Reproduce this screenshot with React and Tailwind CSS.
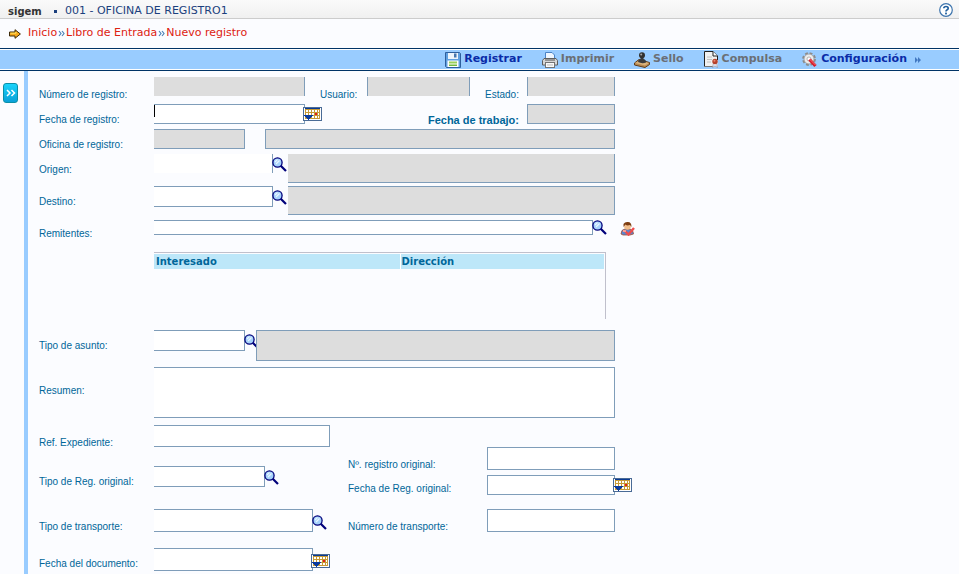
import React from "react";

const SearchIcon = () => (
  <svg width="15" height="15" viewBox="0 0 15 15" aria-hidden="true">
    <path d="M8.500 8.500 L14 14" stroke="#00007a" strokeWidth="2.200" />
    <circle cx="5.500" cy="5.500" r="4.600" fill="#a6d2fb" stroke="#00007a" strokeWidth="1.300" />
    <path d="M3 5 L5.500 2.500 M4 7 L7.500 3.500" stroke="#e8f6ff" strokeWidth="1.200" />
  </svg>
);

const CalendarIcon = () => (
  <svg width="19" height="14" viewBox="0 0 19 14" shapeRendering="crispEdges" aria-hidden="true">
    <rect width="19" height="14" fill="#4a6b96" />
    <rect x="1" y="1" width="17" height="12" fill="#fff" />
    <rect x="2" y="1" width="15" height="1" fill="#0a3a94" />
    <rect x="2" y="2" width="15" height="10" fill="#c79a35" />
    <path
      d="M3 3h2v2H3zM6 3h2v2H6zM9 3h2v2H9zM12 3h2v2h-2zM15 3h1v2h-1zM3 6h2v2H3zM6 6h2v2H6zM9 6h2v2H9zM15 6h1v2h-1zM9 9h2v2H9zM12 9h2v2h-2zM15 9h1v2h-1z"
      fill="#fff"
    />
    <rect x="12" y="6" width="2" height="2" fill="#e0201b" />
    <path d="M1 8h9v1H9v1H8v1H7v1H6v1H5v-1H4v-1H3v-1H2V9H1z" fill="#0a3a9c" />
  </svg>
);

const PersonIcon = () => (
  <svg width="15" height="15" viewBox="0 0 15 15" aria-hidden="true">
    <path d="M1 13 Q1 8.500 5 8 L10 8 Q13.500 9 13.500 13 L10 14 H3 Z" fill="#5b86cf" stroke="#a54b32" strokeWidth="0.800" />
    <circle cx="7.500" cy="5.500" r="3.300" fill="#f1bd8b" />
    <path d="M3.500 6 V3 Q5 0.500 8 1 Q11.500 1 11.500 6 L10 4 Q7 5 5.500 3.500 Z" fill="#7d3d12" />
    <path d="M5 10 L8.500 13.500 L14 7" fill="none" stroke="#ef4d4d" strokeWidth="2.400" />
    <path d="M3 10 H6" stroke="#fb9b90" strokeWidth="2" />
  </svg>
);

const SaveIcon = () => (
  <svg width="16" height="16" viewBox="0 0 16 16" aria-hidden="true">
    <path d="M0.500 0.500 H14.500 L15.500 1.500 V15.500 H1.500 L0.500 14.500 Z" fill="#5f9fe0" stroke="#2e5f9d" />
    <rect x="3" y="1" width="10" height="6" fill="#eef5fc" />
    <rect x="9" y="1.500" width="2.500" height="4" fill="#4676ae" />
    <rect x="2.500" y="8.500" width="11" height="6.500" fill="#fff" />
    <rect x="4" y="9.500" width="8" height="2" fill="#9ad05d" />
    <rect x="4" y="12.500" width="8" height="1.500" fill="#70b83c" />
  </svg>
);

const PrintIcon = () => (
  <svg width="16" height="16" viewBox="0 0 16 16" aria-hidden="true">
    <path d="M3.500 7 V0.500 H10 L12.500 3 V7" fill="#eef6ff" stroke="#4b83c6" />
    <path d="M2 6.500 H14 L15.500 8.500 V13 H0.500 V8.500 Z" fill="#d7d7d7" stroke="#5e5e5e" />
    <path d="M3 8 H13" stroke="#555" />
    <rect x="3.500" y="10.500" width="9" height="5" fill="#fafafa" stroke="#747474" />
    <path d="M5 13 H11" stroke="#bbb" />
  </svg>
);

const StampIcon = () => (
  <svg width="16" height="16" viewBox="0 0 16 16" aria-hidden="true">
    <path d="M0.500 11 L5 7.500 L15.500 10.500 V12.500 L11 15.500 L0.500 13 Z" fill="#b98a52" stroke="#5e3d1c" />
    <path d="M1 11 L5.500 8.500 L15 11 L11 13.500 Z" fill="#d9b27b" />
    <path d="M4 10 Q4 7.500 6.500 7 V5 H9.500 V7 Q12.500 8 12 10.500 Q8 12 4 10 Z" fill="#3b3b3b" />
    <circle cx="8" cy="3.200" r="3" fill="#303030" />
    <circle cx="7.200" cy="2.400" r="1" fill="#a5a5a5" />
  </svg>
);

const CertifiedIcon = () => (
  <svg width="15" height="17" viewBox="0 0 15 17" aria-hidden="true">
    <path d="M0.500 0.500 H9 L13.500 5 V15.500 H0.500 Z" fill="#f1f1f1" />
    <path d="M0.500 15.500 V0.500 H9 L13.500 5 V9" fill="none" stroke="#222" />
    <path d="M9 0.500 V5 H13.500" fill="#fff" stroke="#222" />
    <path d="M3 6 H8 M3 8.500 H8 M3 11 H7" stroke="#c2c2c2" />
    <path d="M0.500 15.500 H9" stroke="#777" />
    <path d="M9.500 12 L8.500 16.500 L11 15 L13.500 16.500 L12.500 12" fill="#e9e9f3" stroke="#8b8b9b" strokeWidth="0.600" />
    <circle cx="11" cy="10.500" r="2.700" fill="#b5402b" />
    <circle cx="10.500" cy="9.800" r="1" fill="#e9876d" />
  </svg>
);

const SettingsIcon = () => (
  <svg width="16" height="16" viewBox="0 0 16 16" aria-hidden="true">
    <circle cx="7" cy="7" r="5.700" fill="none" stroke="#8b8b8b" strokeWidth="2.400" strokeDasharray="2.700 1.770" />
    <circle cx="7" cy="7" r="5" fill="#ececec" stroke="#999" strokeWidth="0.800" />
    <circle cx="7" cy="7" r="2" fill="#fff" stroke="#999" strokeWidth="0.700" />
    <path d="M7.500 7.500 L13.500 14" stroke="#d51c2b" strokeWidth="3.200" />
    <path d="M7.500 7 L13.500 13" stroke="#ff8588" strokeWidth="0.800" />
  </svg>
);

const ArrowIcon = () => (
  <svg width="12" height="10" viewBox="0 0 12 10" aria-hidden="true">
    <path d="M0.500 3 H6 V0.700 L11.400 5 L6 9.300 V7 H0.500 Z" fill="#f7a91c" stroke="#3d2a08" />
    <path d="M1.500 4.200 H7 V3" fill="none" stroke="#ffe45f" />
  </svg>
);

const HelpIcon = () => (
  <svg width="14" height="14" viewBox="0 0 14 14" aria-hidden="true">
    <circle cx="7" cy="7" r="6.300" fill="#fff" stroke="#3d74ad" strokeWidth="1.200" />
    <path d="M4.800 5.300 Q4.900 3.500 7 3.500 Q9.200 3.500 9.200 5.200 Q9.200 6.300 7.900 6.900 Q7 7.400 7 8.500" fill="none" stroke="#215f9e" strokeWidth="1.700" />
    <rect x="6.100" y="9.600" width="1.800" height="1.800" fill="#215f9e" />
  </svg>
);

const CrumbMark = () => (
  <svg width="7" height="7" viewBox="0 0 7 7" aria-hidden="true">
    <path d="M1 1 L3 3.500 L1 6 M4 1 L6 3.500 L4 6" fill="none" stroke="#4a83b8" strokeWidth="1.200" />
  </svg>
);

const PanelChevrons = () => (
  <svg width="10" height="8" viewBox="0 0 10 8" aria-hidden="true">
    <path d="M1 1 L4 4 L1 7 M5.500 1 L8.500 4 L5.500 7" fill="none" stroke="#ffffff" strokeWidth="1.500" />
  </svg>
);

const FastForward = () => (
  <svg width="6" height="6" viewBox="0 0 6 6" aria-hidden="true">
    <path d="M0 0 L3 3 L0 6 Z M3 0 L6 3 L3 6 Z" fill="#4279c2" />
  </svg>
);

const LINE = "border-[#7f9db9]";
const OPEN_LEFT = "border-y border-r";

function Label({ htmlFor, className = "w-[115px] pt-2", children }) {
  return (
    <label htmlFor={htmlFor} className={`shrink-0 whitespace-nowrap ${className}`}>
      {children}
    </label>
  );
}

function Field({ id, className, edges = OPEN_LEFT, locked = false, ...rest }) {
  return (
    <input
      id={id}
      type="text"
      readOnly={locked}
      className={`min-w-0 rounded-none px-1 text-black outline-none ${LINE} ${edges} ${locked ? "bg-[#dddddd]" : "bg-white"} ${className}`}
      {...rest}
    />
  );
}

const Lookup = ({ label, className = "mt-1" }) => (
  <button type="button" aria-label={label} className={`relative -ml-px h-[15px] w-4 shrink-0 ${className}`}>
    <SearchIcon />
  </button>
);

const DatePick = ({ label, className = "mt-[3px]" }) => (
  <button type="button" aria-label={label} className={`relative -ml-0.5 h-3.5 shrink-0 ${className}`}>
    <CalendarIcon />
  </button>
);

function Action({ icon, enabled = false, children }) {
  return (
    <button
      type="button"
      disabled={!enabled}
      className={`flex items-center gap-[3px] text-[11px] font-bold ${enabled ? "text-[#0a2ba8]" : "text-[#6b6f75]"}`}
    >
      {icon}
      <span className="pb-0.5 leading-4">{children}</span>
    </button>
  );
}

export default function App() {
  return (
    <div className="flex min-h-screen flex-col bg-[#fbfcff] font-['Verdana','DejaVu_Sans',sans-serif] text-[11px]">
      <header className="flex h-[19px] items-center border-b border-[#cccccc] bg-gradient-to-b from-[#fafafa] to-[#f0f0f0] pt-1 pr-1.5 pl-2">
        <strong className="w-[46px] text-[10px] text-[#333333]">sigem</strong>
        <span className="mr-2 size-[3px] bg-[#1b3f7d]" />
        <span className="text-[#1b3f7d]">001 - OFICINA DE REGISTRO1</span>
        <button type="button" aria-label="Ayuda" className="ml-auto pb-0.5">
          <HelpIcon />
        </button>
      </header>

      <nav aria-label="Ruta" className="flex h-[29px] items-center gap-px pl-[9px] text-[#dd2211]">
        <span className="mr-1.5">
          <ArrowIcon />
        </span>
        <a href="#inicio">Inicio</a>
        <CrumbMark />
        <a href="#libro">Libro de Entrada</a>
        <CrumbMark />
        <a href="#nuevo">Nuevo registro</a>
      </nav>

      <div role="toolbar" aria-label="Acciones" className="border-y border-[#003366]">
        <div className="flex h-[21px] items-center justify-end gap-5 border-y border-white bg-[#99ccff] pr-[38px]">
          <Action enabled icon={<SaveIcon />}>Registrar</Action>
          <Action icon={<PrintIcon />}>Imprimir</Action>
          <Action icon={<StampIcon />}>Sello</Action>
          <Action icon={<CertifiedIcon />}>Compulsa</Action>
          <div className="flex items-center gap-2">
            <Action enabled icon={<SettingsIcon />}>Configuración</Action>
            <FastForward />
          </div>
        </div>
      </div>

      <div className="flex flex-1">
        <aside className="w-6 shrink-0 pt-3 pl-[3px]">
          <button
            type="button"
            aria-label="Mostrar panel"
            className="flex h-5 w-[15px] items-center justify-center rounded-[3px] border border-[#0a8fa8] bg-gradient-to-b from-[#19d3fb] to-[#0aa0d8]"
          >
            <PanelChevrons />
          </button>
        </aside>
        <div className="w-1 shrink-0 bg-[#99ccff]" />

        <form className="flex flex-1 flex-col pt-1.5 pl-[11px] font-['Liberation_Sans',Arial,sans-serif] text-[10px] leading-4 text-[#006699]">
          <div className="flex h-[27px] items-start">
            <Label htmlFor="numero" className="w-[115px] pt-2.5">Número de registro:</Label>
            <Field id="numero" locked edges="border-r" className="h-[19px] w-[151px]" />
            <Label htmlFor="usuario" className="w-[62px] pt-2.5 pl-[15px]">Usuario:</Label>
            <Field id="usuario" locked edges="border-x" className="h-[19px] w-[103px]" />
            <Label htmlFor="estado" className="w-[57px] pt-2.5 pl-[15px]">Estado:</Label>
            <Field id="estado" locked edges="border-x" className="h-[19px] w-[88px]" />
          </div>

          <div className="flex h-[25px] w-full max-w-[576px] items-start">
            <Label htmlFor="fecha">Fecha de registro:</Label>
            <div className="relative">
              <Field id="fecha" className="block h-5 w-[151px]" />
              <span className="absolute top-px left-0 h-3 w-px bg-black" />
            </div>
            <DatePick label="Elegir fecha de registro" />
            <Label htmlFor="trabajo" className="ml-auto pt-2 pr-2 text-[11px] font-bold">Fecha de trabajo:</Label>
            <Field id="trabajo" locked edges="border" className="h-5 w-[88px]" />
          </div>

          <div className="flex h-[25px] w-full max-w-[576px] items-start">
            <Label htmlFor="oficina">Oficina de registro:</Label>
            <Field id="oficina" locked className="h-5 w-[91px]" />
            <Field id="oficina-nombre" aria-label="Nombre de la oficina" locked edges="border" className="ml-5 h-5 flex-1" />
          </div>

          <div className="flex h-8 w-full max-w-[576px] items-start">
            <Label htmlFor="origen">Origen:</Label>
            <Field id="origen" edges="border-r" className="h-[19px] w-[119px]" />
            <Lookup label="Buscar origen" className="mt-[3px]" />
            <Field id="origen-nombre" aria-label="Nombre del origen" locked edges="border-r border-b" className="h-[29px] flex-1" />
          </div>

          <div className="flex h-[34px] w-full max-w-[576px] items-start">
            <Label htmlFor="destino">Destino:</Label>
            <Field id="destino" className="h-[21px] w-[119px]" />
            <Lookup label="Buscar destino" />
            <Field id="destino-nombre" aria-label="Nombre del destino" locked className="h-[29px] flex-1" />
          </div>

          <div className="flex h-8 items-start">
            <Label htmlFor="remitentes" className="w-[115px] pt-1.5">Remitentes:</Label>
            <Field id="remitentes" className="h-[15px] w-[439px]" />
            <Lookup label="Buscar remitentes" className="mt-0" />
            <button type="button" aria-label="Validar remitente" className="ml-3 h-4">
              <PersonIcon />
            </button>
          </div>

          <div className="h-[78px] pl-[115px]">
            <div className="h-[67px] w-full max-w-[452px] border-t border-r border-[#c0c0cc] pt-px pr-px">
              <table className="w-full table-fixed border-collapse font-['Verdana','DejaVu_Sans',sans-serif] text-[10px] leading-[15px]">
                <thead>
                  <tr className="bg-[#bde7f9] text-left">
                    <th className="w-[246px] border-r border-white pl-0.5">Interesado</th>
                    <th className="pl-px">Dirección</th>
                  </tr>
                </thead>
              </table>
            </div>
          </div>

          <div className="flex h-[37px] w-full max-w-[576px] items-start">
            <Label htmlFor="asunto">Tipo de asunto:</Label>
            <Field id="asunto" className="h-[21px] w-[91px]" />
            <div className="w-[11px] shrink-0">
              <Lookup label="Buscar tipo de asunto" />
            </div>
            <Field id="asunto-nombre" aria-label="Nombre del asunto" locked edges="border" className="relative h-[31px] flex-1" />
          </div>

          <div className="flex h-[58px] w-full max-w-[576px] items-start">
            <Label htmlFor="resumen" className="w-[115px] pt-4">Resumen:</Label>
            <textarea id="resumen" className={`h-[51px] min-w-0 flex-1 resize-none rounded-none bg-white px-1 text-black outline-none ${LINE} ${OPEN_LEFT}`} />
          </div>

          <div className="flex items-start">
            <div className="w-[309px] shrink-0">
              <div className="flex h-[41px] items-start">
                <Label htmlFor="expediente" className="w-[115px] pt-2.5">Ref. Expediente:</Label>
                <Field id="expediente" className="h-[22px] w-[176px]" />
              </div>
              <div className="flex h-[43px] items-start">
                <Label htmlFor="tipo-reg">Tipo de Reg. original:</Label>
                <Field id="tipo-reg" className="h-[21px] w-[111px]" />
                <Lookup label="Buscar tipo de registro" />
              </div>
              <div className="flex h-[39px] items-start">
                <Label htmlFor="tipo-transporte" className="w-[115px] pt-2.5">Tipo de transporte:</Label>
                <Field id="tipo-transporte" className="h-[23px] w-[159px]" />
                <Lookup label="Buscar tipo de transporte" className="mt-1.5" />
              </div>
              <div className="flex h-[23px] items-start">
                <Label htmlFor="fecha-doc">Fecha del documento:</Label>
                <Field id="fecha-doc" className="h-[23px] w-[159px]" />
                <DatePick label="Elegir fecha del documento" className="mt-1.5" />
              </div>
            </div>
            <div className="pt-[22px]">
              <div className="flex h-7 items-start">
                <Label htmlFor="num-original" className="w-[139px] pt-2.5">Nº. registro original:</Label>
                <Field id="num-original" edges="border" className="h-[23px] w-32" />
              </div>
              <div className="flex h-[34px] items-start">
                <Label htmlFor="fecha-original" className="w-[139px] pt-1.5">Fecha de Reg. original:</Label>
                <Field id="fecha-original" edges="border" className="h-5 w-32" />
                <DatePick label="Elegir fecha de registro original" />
              </div>
              <div className="flex items-start">
                <Label htmlFor="num-transporte" className="w-[139px] pt-2.5">Número de transporte:</Label>
                <Field id="num-transporte" edges="border" className="h-[23px] w-32" />
              </div>
            </div>
          </div>
        </form>
      </div>
    </div>
  );
}
